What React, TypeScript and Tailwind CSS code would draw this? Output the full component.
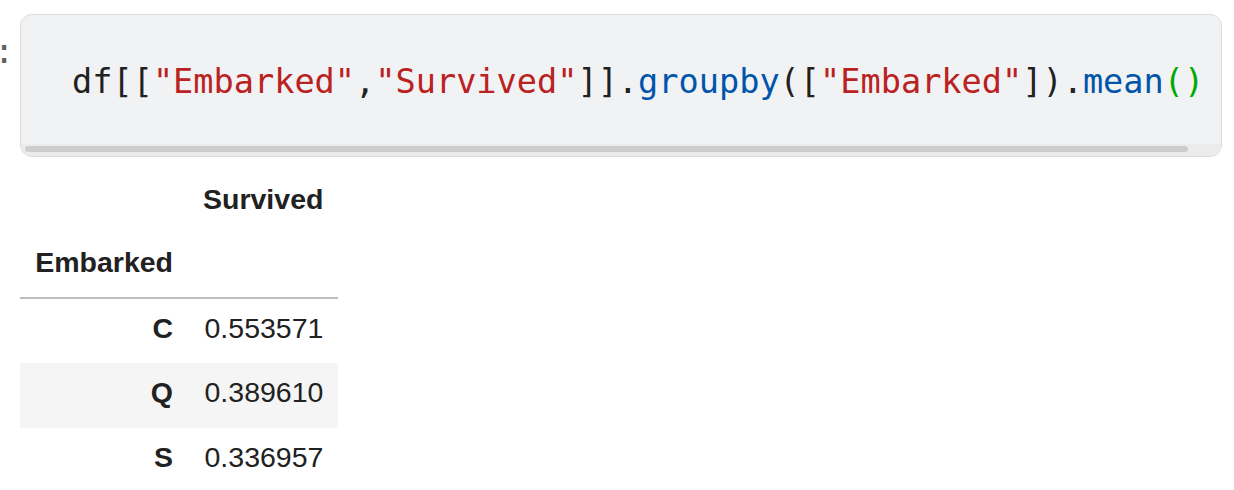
export default function App() {
  const mono = { fontFamily: '"DejaVu Sans Mono", "Liberation Mono", monospace' };
  const sans = { fontFamily: '"Liberation Sans", Arial, sans-serif' };

  const rows = [
    { idx: "C", val: "0.553571" },
    { idx: "Q", val: "0.389610" },
    { idx: "S", val: "0.336957" },
  ];

  return (
    <div className="w-[1234px] h-[490px] bg-white overflow-hidden">
      {/* Input cell */}
      <div className="flex pt-[14px]">
        <div className="w-[20px] overflow-hidden pt-[18px]">
          <span className="block -ml-[6px] text-[33.6px] leading-[40px] text-[#616161]" style={mono}>
            :
          </span>
        </div>
        <div className="w-[1202px] h-[143px] flex flex-col rounded-[12px] border border-[#dcdcdf] bg-[#f1f2f4] overflow-hidden">
          <div className="flex-1 flex items-center pl-[51px] pt-[5px]">
            <pre className="text-[33.6px] leading-[40px] text-[#212121] whitespace-pre" style={mono}>
              df[[<span className="text-[#ba2121]">"Embarked"</span>,
              <span className="text-[#ba2121]">"Survived"</span>]].
              <span className="text-[#0055aa]">groupby</span>([
              <span className="text-[#ba2121]">"Embarked"</span>]).
              <span className="text-[#0055aa]">mean</span>
              <span className="text-[#00aa00]">()</span>
            </pre>
          </div>
          <div className="h-[12px] bg-[#ececec] pl-[4px] pt-[2px]">
            <div className="w-[1163px] h-[6px] rounded-full bg-[#cdcdcd]" />
          </div>
        </div>
      </div>

      {/* Output table */}
      <div className="pl-[20px] pt-[10px]">
        <table className="border-collapse text-[28.5px] text-[#212121]" style={sans}>
          <thead>
            <tr className="h-[65px]">
              <th className="w-[168px]" />
              <th className="w-[150px] text-right font-bold px-[15px]">Survived</th>
            </tr>
            <tr className="h-[66px] border-b-2 border-[#bdbdbd]">
              <th className="text-right font-bold px-[15px] pb-[4px]">Embarked</th>
              <th />
            </tr>
          </thead>
          <tbody>
            {rows.map((r, i) => (
              <tr key={r.idx} className={`h-[65px] ${i % 2 === 1 ? "bg-[#f5f5f5]" : "bg-white"}`}>
                <th className="text-right font-bold px-[15px] pb-[6px]">{r.idx}</th>
                <td className="text-right font-normal px-[15px] pb-[6px]">{r.val}</td>
              </tr>
            ))}
          </tbody>
        </table>
      </div>
    </div>
  );
}
